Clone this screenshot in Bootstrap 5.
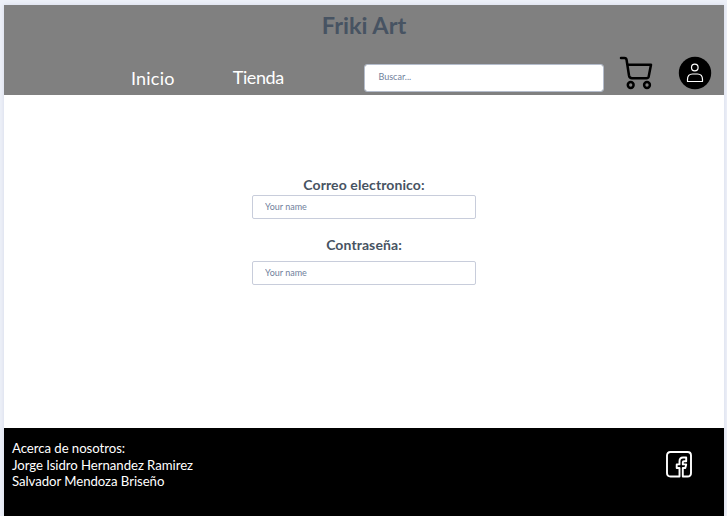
<!DOCTYPE html>
<html lang="es">
<head>
<meta charset="utf-8">
<meta name="viewport" content="width=device-width, initial-scale=1">
<title>Friki Art</title>
<link rel="stylesheet" href="https://cdn.jsdelivr.net/npm/bootstrap@5.3.0/dist/css/bootstrap.min.css">
<style>
body { font-family: Lato, sans-serif; background: #edf0f8; height: 516px; overflow: hidden; padding: 5px 3px 0 4px; }
.site { height: 511px; box-shadow: 0 0 4px #d5dae8; }
.site-header { height: 90px; background: #808080; }
.brand { font-size: 23.5px; line-height: 28px; font-weight: 700; color: #475362; padding-top: 6px; }
.menu { padding: 17px 12px 0 127px; }
.menu-link { font-size: 18px; line-height: 22px; color: #fff; text-decoration: none; }
.link-inicio { width: 102px; margin-top: 11px; letter-spacing: .2px; }
.link-tienda { width: 131px; margin-top: 10px; letter-spacing: -.4px; }
.form-control.field { font-size: 9px; line-height: 12px; padding: 0 12px 1px; border: 1px solid #c8cddb; border-radius: 2px; height: 24px; }
.form-control.field::placeholder { color: #717f9c; }
.form-control.search { width: 240px; height: 28px; margin: 8px 0 0 1px; border-color: #b4bccb; border-radius: 3px; padding: 0 13px 3px; }
.cart { margin-left: 15px; }
.account { margin-left: 25px; }
.login { width: 224px; padding-top: 80px; }
.field-label { font-size: 14px; letter-spacing: .1px; line-height: 19px; font-weight: 700; color: #475362; display: block; }
.label-first { margin-bottom: 1px; }
.label-second { margin: 16px 0 7px; }
.site-footer { height: 88px; font-size: 13.2px; letter-spacing: -.05px; line-height: 16.6px; padding: 12px 32px 0 8px; }
.social { margin-top: 11px; }
</style>
<script src="https://cdn.jsdelivr.net/npm/bootstrap@5.3.0/dist/js/bootstrap.bundle.min.js"></script>
</head>
<body>
<div class="site d-flex flex-column bg-white">
  <header class="site-header">
    <div class="brand text-center">Friki Art</div>
    <nav class="menu d-flex align-items-start">
      <a class="menu-link link-inicio" href="#">Inicio</a>
      <a class="menu-link link-tienda" href="#">Tienda</a>
      <input class="form-control field search" type="search" placeholder="Buscar..." aria-label="Buscar">
      <svg class="cart flex-shrink-0" width="34" height="34" viewBox="0 0 34 34" fill="none" stroke="#000" stroke-width="2.5" stroke-linejoin="round" stroke-linecap="round">
        <path d="M2 2H5.5Q7.3 2 7.6 4L10 19.500Q10.500 22.300 13 22.300H27.500Q29.300 22.300 29.700 20.500L32 8.700H8.500"/>
        <circle cx="11.700" cy="29" r="2.900"/><circle cx="28" cy="29" r="2.900"/>
      </svg>
      <svg class="account flex-shrink-0" width="34" height="34" viewBox="0 0 34 34">
        <circle cx="17" cy="17" r="16.200" fill="#000"/>
        <g fill="none" stroke="#fff" stroke-width="1.200"><circle cx="16.800" cy="11.500" r="3.300"/><path d="M9.500 25.500V23.500Q9.500 18 14.500 18H19.500Q24.500 18 24.500 23.500V25.500Z" stroke-linejoin="round"/></g>
      </svg>
    </nav>
  </header>
  <main class="flex-grow-1">
    <form class="login mx-auto">
      <label class="field-label label-first text-center" for="correo">Correo electronico:</label>
      <input class="form-control field" id="correo" type="text" placeholder="Your name">
      <label class="field-label label-second text-center" for="clave">Contraseña:</label>
      <input class="form-control field" id="clave" type="text" placeholder="Your name">
    </form>
  </main>
  <footer class="site-footer d-flex justify-content-between align-items-start bg-black text-white">
    <div>Acerca de nosotros:<br>Jorge Isidro Hernandez Ramirez<br>Salvador Mendoza Briseño</div>
    <svg class="social" width="26" height="27" viewBox="0 0 26 27" fill="none" stroke="#fff" stroke-width="1.900" stroke-linejoin="round">
      <path d="M13.500 25.500H4.500Q1 25.500 1 22V4.500Q1 1 4.500 1H21.500Q25 1 25 4.500V22Q25 25.500 21.500 25.500H16.800V17H19.300L20.200 13.400H16.800V11.500Q16.800 10.300 18 10.300H20.200V6.500H17Q13.500 6.500 13.500 10.300V13.400H10.700V17H13.500Z"/>
    </svg>
  </footer>
</div>
</body>
</html>
